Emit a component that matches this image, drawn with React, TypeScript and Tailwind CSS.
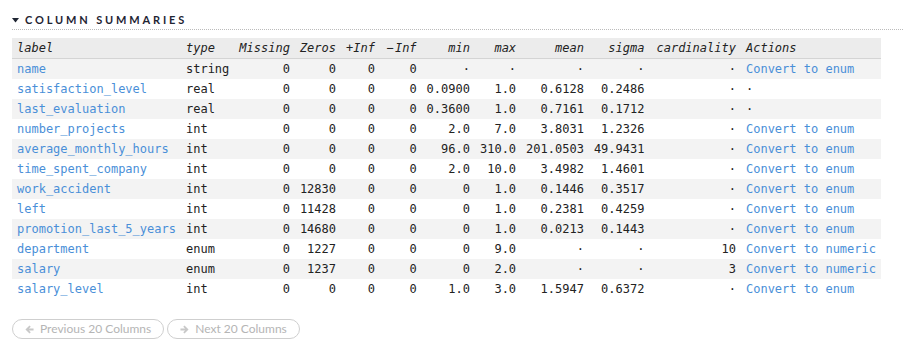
import React from "react";

type Row = {
  label: string;
  type: string;
  missing: string;
  zeros: string;
  pinf: string;
  ninf: string;
  min: string;
  max: string;
  mean: string;
  sigma: string;
  cardinality: string;
  action: string | null;
};

const D = "·";

const rows: Row[] = [
  { label: "name", type: "string", missing: "0", zeros: "0", pinf: "0", ninf: "0", min: D, max: D, mean: D, sigma: D, cardinality: D, action: "Convert to enum" },
  { label: "satisfaction_level", type: "real", missing: "0", zeros: "0", pinf: "0", ninf: "0", min: "0.0900", max: "1.0", mean: "0.6128", sigma: "0.2486", cardinality: D, action: null },
  { label: "last_evaluation", type: "real", missing: "0", zeros: "0", pinf: "0", ninf: "0", min: "0.3600", max: "1.0", mean: "0.7161", sigma: "0.1712", cardinality: D, action: null },
  { label: "number_projects", type: "int", missing: "0", zeros: "0", pinf: "0", ninf: "0", min: "2.0", max: "7.0", mean: "3.8031", sigma: "1.2326", cardinality: D, action: "Convert to enum" },
  { label: "average_monthly_hours", type: "int", missing: "0", zeros: "0", pinf: "0", ninf: "0", min: "96.0", max: "310.0", mean: "201.0503", sigma: "49.9431", cardinality: D, action: "Convert to enum" },
  { label: "time_spent_company", type: "int", missing: "0", zeros: "0", pinf: "0", ninf: "0", min: "2.0", max: "10.0", mean: "3.4982", sigma: "1.4601", cardinality: D, action: "Convert to enum" },
  { label: "work_accident", type: "int", missing: "0", zeros: "12830", pinf: "0", ninf: "0", min: "0", max: "1.0", mean: "0.1446", sigma: "0.3517", cardinality: D, action: "Convert to enum" },
  { label: "left", type: "int", missing: "0", zeros: "11428", pinf: "0", ninf: "0", min: "0", max: "1.0", mean: "0.2381", sigma: "0.4259", cardinality: D, action: "Convert to enum" },
  { label: "promotion_last_5_years", type: "int", missing: "0", zeros: "14680", pinf: "0", ninf: "0", min: "0", max: "1.0", mean: "0.0213", sigma: "0.1443", cardinality: D, action: "Convert to enum" },
  { label: "department", type: "enum", missing: "0", zeros: "1227", pinf: "0", ninf: "0", min: "0", max: "9.0", mean: D, sigma: D, cardinality: "10", action: "Convert to numeric" },
  { label: "salary", type: "enum", missing: "0", zeros: "1237", pinf: "0", ninf: "0", min: "0", max: "2.0", mean: D, sigma: D, cardinality: "3", action: "Convert to numeric" },
  { label: "salary_level", type: "int", missing: "0", zeros: "0", pinf: "0", ninf: "0", min: "1.0", max: "3.0", mean: "1.5947", sigma: "0.6372", cardinality: D, action: "Convert to enum" },
];

const numericHeads: React.ReactNode[] = [
  "Missing",
  "Zeros",
  "+Inf",
  <>
    <span className="inline-block w-[10px] text-center">−</span>Inf
  </>,
  "min",
  "max",
  "mean",
  "sigma",
  "cardinality",
];

// last numeric column (cardinality) sits a touch further from sigma
const numCell = (j: number) =>
  j === 8 ? "pl-[7px] pr-[5px] text-right" : "px-[5px] text-right";

function ArrowIcon({ dir }: { dir: "left" | "right" }) {
  return (
    <svg
      width="9"
      height="9"
      viewBox="0 0 10 10"
      className={dir === "right" ? "rotate-180" : ""}
    >
      <path d="M0.5 5 L5 0.6 L6.4 2 L4.3 4 H9.5 V6 H4.3 L6.4 8 L5 9.4 Z" fill="#c8c8c8" />
    </svg>
  );
}

function PagerButton({ dir, label }: { dir: "left" | "right"; label: string }) {
  return (
    <button
      type="button"
      disabled
      className="inline-flex h-[20px] items-center gap-[6px] rounded-full border border-[#cfcfcf] bg-white px-[12px] text-[12px] leading-none text-[#b5b5b5]"
      style={{ fontFamily: "Lato, 'Open Sans', sans-serif" }}
    >
      <ArrowIcon dir={dir} />
      {label}
    </button>
  );
}

export default function App() {
  return (
    <div className="min-h-[354px] bg-white pl-[12px] pt-[13px]">
      <div className="flex items-center gap-[6px] border-b border-dotted border-[#bbbbbb] pb-[2px]">
        <svg width="7" height="5" viewBox="0 0 7 5" className="mt-[1px]">
          <path d="M0 0 H7 L3.5 4.5 Z" fill="#1f2533" />
        </svg>
        <h2
          className="text-[11px] font-bold uppercase leading-[14px] tracking-[2.85px] text-[#1f2533]"
          style={{ fontFamily: "Lato, 'Open Sans', sans-serif" }}
        >
          Column Summaries
        </h2>
      </div>

      <table
        className="mt-[8px] border-collapse text-[12px] leading-[20px] text-[#222]"
        style={{ fontFamily: "'DejaVu Sans Mono', 'Liberation Mono', monospace" }}
      >
        <thead>
          <tr className="border-b border-[#d4d4d4] bg-[#ececec]">
            <th className="px-[5px] text-left font-normal italic">label</th>
            <th className="px-[5px] text-left font-normal italic">type</th>
            {numericHeads.map((h, k) => (
              <th key={k} className={`whitespace-nowrap font-normal italic ${numCell(k)}`}>
                {h}
              </th>
            ))}
            <th className="px-[5px] text-left font-normal italic">Actions</th>
          </tr>
        </thead>
        <tbody>
          {rows.map((r, i) => (
            <tr key={r.label} className={i % 2 === 0 ? "bg-[#f3f3f3]" : "bg-white"}>
              <td className="whitespace-nowrap px-[5px] text-[#4a8fd8]">{r.label}</td>
              <td className="px-[5px]">{r.type}</td>
              {[r.missing, r.zeros, r.pinf, r.ninf, r.min, r.max, r.mean, r.sigma, r.cardinality].map((v, j) => (
                <td key={j} className={numCell(j)}>
                  {v}
                </td>
              ))}
              <td className="whitespace-nowrap px-[5px]">
                {r.action ? <span className="text-[#4a8fd8]">{r.action}</span> : D}
              </td>
            </tr>
          ))}
        </tbody>
      </table>

      <div className="mt-[20px] flex gap-[3px]">
        <PagerButton dir="left" label="Previous 20 Columns" />
        <PagerButton dir="right" label="Next 20 Columns" />
      </div>
    </div>
  );
}
